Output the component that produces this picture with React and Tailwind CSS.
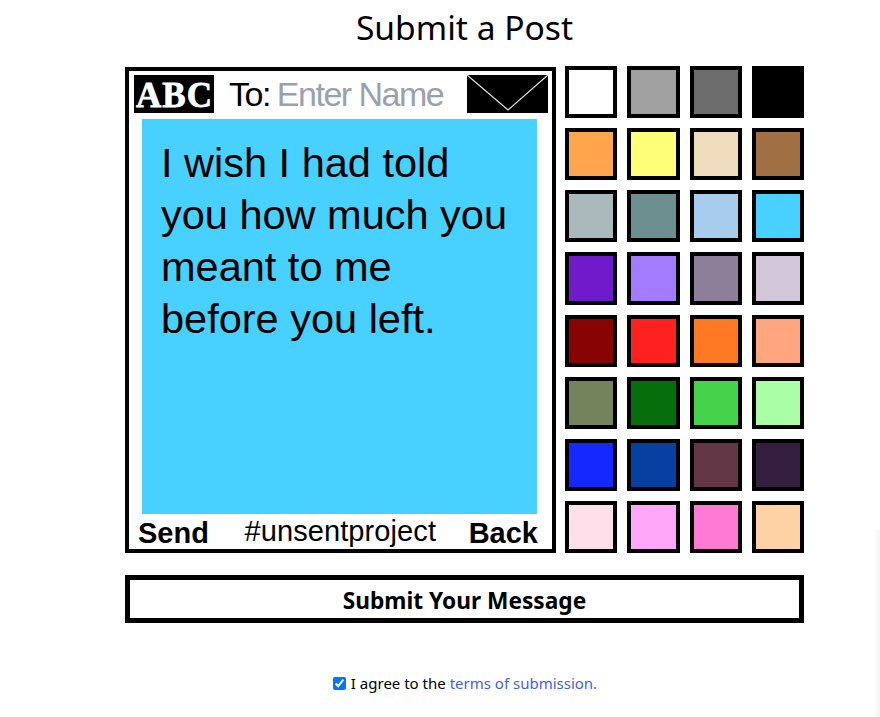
const swatches = [
  "#ffffff","#a0a0a0","#6d6d6d","#000000",
  "#ffa64d","#ffff77","#eedcbc","#a07044",
  "#aab8bb","#6b8e8e","#a8cdec","#48d0ff",
  "#6f1bcc","#a37bff","#8d7f99","#d1c7d9",
  "#880303","#ff2020","#ff7823","#ffa580",
  "#75835d","#066e0a","#46d24a","#aaffa6",
  "#1428ff","#0740a0","#623644","#341f40",
  "#ffe0ea","#ffa8fa","#ff7bd3","#ffd2a6",
];

export default function App() {
  return (
    <div className="relative h-[717px] w-[880px] overflow-hidden bg-white font-['Noto_Sans','Open_Sans',sans-serif] text-black">
      <div className="ml-[125px] w-[679px]">
        <h1 className="h-[66px] pt-[5px] text-center text-[33.6px] leading-[44px] font-normal">Submit a Post</h1>
        <div className="flex items-start gap-[9px]">
          <div className="mt-px flex h-[486px] w-[431px] shrink-0 flex-col border-4 border-black font-['Liberation_Sans',Arial,sans-serif]">
            <div className="flex h-[48px] shrink-0 items-start pt-[4px] pl-[5px]">
              <div className="flex h-[38px] w-[80px] items-center justify-center bg-black pt-[2px] pl-[1px] font-['Liberation_Serif',serif] text-[35px] leading-none font-bold tracking-[1px] text-white [-webkit-text-stroke:0.8px_white]">ABC</div>
              <span className="ml-[15px] text-[34px] leading-[38px] tracking-[-1.5px]">To:</span>
              <input
                placeholder="Enter Name"
                className="ml-[7px] h-[38px] w-[186px] bg-transparent font-['Liberation_Sans',Arial,sans-serif] text-[34px] leading-[38px] tracking-[-1.5px] outline-none placeholder:text-gray-400"
              />
              <svg viewBox="0 0 81 38" className="ml-[4px] h-[38px] w-[81px] shrink-0 bg-black">
                <path d="M0 0 L41 35 L81 0" fill="none" stroke="#e5e5e5" strokeWidth="1.3" />
              </svg>
            </div>
            <textarea
              readOnly
              defaultValue="I wish I had told you how much you meant to me before you left."
              className="ml-[13px] h-[395px] w-[395px] shrink-0 resize-none overflow-hidden bg-[#48d0ff] px-[19px] py-[18px] font-['Liberation_Sans',Arial,sans-serif] text-[41.5px] leading-[52px] outline-none"
            />
            <div className="flex flex-1 items-start justify-between pr-[14px] pl-[9px]">
              <span className="pt-[2px] text-[29px] leading-[34px] font-bold">Send</span>
              <span className="ml-[3px] pt-[1px] text-[29px] leading-[32px] tracking-[0.1px]">#unsentproject</span>
              <span className="pt-[2px] text-[29px] leading-[34px] font-bold">Back</span>
            </div>
          </div>
          <div className="grid h-[487px] flex-1 grid-cols-4 grid-rows-8 gap-[10px]">
            {swatches.map((c) => (
              <button key={c} className="border-4 border-black" style={{ backgroundColor: c }} aria-label={c} />
            ))}
          </div>
        </div>
        <button className="mt-[22px] h-[48px] w-full border-[5px] border-black bg-white pt-[4px] text-[22.7px] leading-none font-bold">Submit Your Message</button>
        <label className="mt-[48px] flex items-center justify-center gap-[5px] pl-[1px] text-[15px] leading-[24px]">
          <input type="checkbox" defaultChecked className="h-[13px] w-[13px]" />
          <span>I agree to the <a className="text-[#3f5ef0]">terms of submission.</a></span>
        </label>
      </div>
      <div className="absolute top-[530px] right-0 bottom-0 w-[7px] bg-gradient-to-r from-transparent to-[#f4f4f4]" />
    </div>
  );
}
